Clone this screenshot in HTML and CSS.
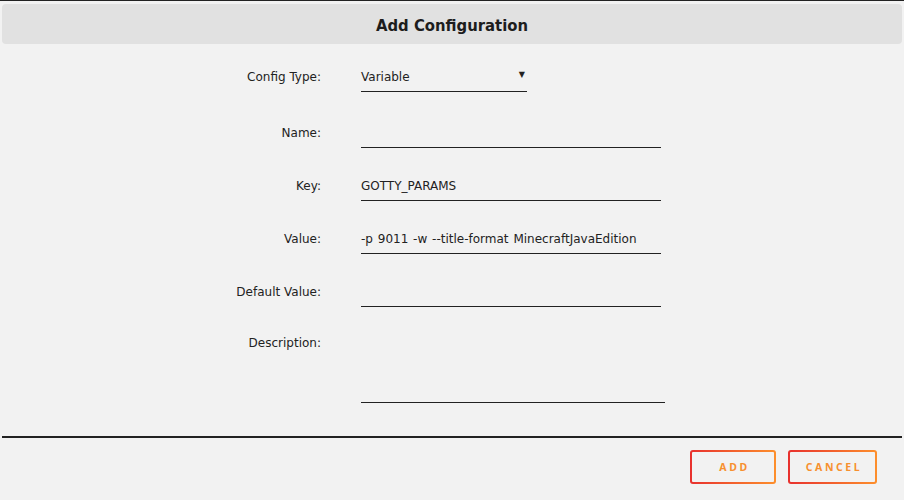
FILE: index.html
```html
<!DOCTYPE html>
<html lang="en">
<head>
  <meta charset="UTF-8" />
  <meta name="viewport" content="width=device-width, initial-scale=1.0"/>
  <title>Add Configuration</title>
  <link rel="stylesheet" href="styles.css">
</head>
<body>
  <div class="dialog">
    <div class="dialog-head">
      <h1>Add Configuration</h1>
    </div>

    <!-- form rows -->
    <form class="config-form">
      <div class="row row-first">
        <label>Config Type:</label>
        <div class="select">
          <span>Variable</span>
          <span class="caret">&#9660;</span>
        </div>
      </div>
      <div class="row">
        <label>Name:</label>
        <input type="text" class="field" value="" />
      </div>
      <div class="row">
        <label>Key:</label>
        <input type="text" class="field" value="GOTTY_PARAMS" />
      </div>
      <div class="row">
        <label>Value:</label>
        <input type="text" class="field" value="-p 9011 -w --title-format MinecraftJavaEdition" />
      </div>
      <div class="row">
        <label>Default Value:</label>
        <input type="text" class="field" value="" />
      </div>
      <div class="row row-desc">
        <label>Description:</label>
        <textarea class="field area"></textarea>
      </div>
    </form>

    <div class="dialog-foot">
      <button class="btn btn-add">ADD</button>
      <button class="btn btn-cancel">CANCEL</button>
    </div>
  </div>
</body>
</html>
```

FILE: styles.css
```css
:root {
  --bg: #f2f2f2;
  --head-bg: #e1e1e1;
  --ink: #222;
  --red: #e8312e;
  --orange: #fd8f2c;
}
body {
  margin: 0;
  background: var(--bg);
  color: var(--ink);
  font-family: 'DejaVu Sans', sans-serif;
  font-size: 12px;
  border-top: 1px solid #222;
}
/* header */
.dialog-head {
  margin: 3px 2px 0;
  height: 40px;
  box-sizing: border-box;
  padding-top: 3px;
  background: var(--head-bg);
  border-radius: 4px;
  display: flex;
  align-items: center;
  justify-content: center;
}
.dialog-head h1 {
  margin: 0;
  font-size: 16.5px;
  font-weight: bold;
  font-family: 'DejaVu Sans Condensed', 'DejaVu Sans', sans-serif;
  color: #1d1d1d;
}
/* form */
.config-form {
  padding-top: 18px;
  display: flex;
  flex-direction: column;
  gap: 23px;
}
.row {
  display: grid;
  grid-template-columns: 321px 1fr;
  column-gap: 40px;
  align-items: center;
}
.row-first {
  margin-bottom: 3px;
}
.row label {
  text-align: right;
}
.field {
  width: 300px;
  height: 30px;
  box-sizing: border-box;
  border: none;
  border-bottom: 1px solid var(--ink);
  background: transparent;
  font-family: inherit;
  font-size: 12px;
  word-spacing: 1px;
  color: var(--ink);
  padding: 0;
  outline: none;
}
.select {
  width: 166px;
  height: 30px;
  box-sizing: border-box;
  border-bottom: 1px solid var(--ink);
  display: flex;
  align-items: center;
  justify-content: space-between;
}
.caret {
  font-size: 8px;
  margin-right: 2px;
  margin-top: -4px;
}
.row-desc {
  align-items: start;
  margin-top: 5px;
}
.row-desc label {
  line-height: 16px;
}
.area {
  width: 304px;
  height: 68px;
  resize: none;
}
/* footer */
.dialog-foot {
  margin: 33px 2px 0;
  border-top: 2px solid var(--ink);
  padding: 12px 25px 0 0;
  display: flex;
  justify-content: flex-end;
  gap: 12px;
}
.btn {
  height: 34px;
  border: 2px solid transparent;
  border-radius: 3px;
  background:
    linear-gradient(var(--bg), var(--bg)) padding-box,
    linear-gradient(90deg, var(--red), var(--orange)) border-box;
  color: #f7902f;
  font-family: 'Noto Sans', sans-serif;
  font-size: 10.5px;
  font-weight: bold;
  letter-spacing: 2.6px;
  padding: 0 0 0 3px;
  cursor: pointer;
}
.btn-add {
  width: 86px;
}
.btn-cancel {
  width: 89px;
}
```
